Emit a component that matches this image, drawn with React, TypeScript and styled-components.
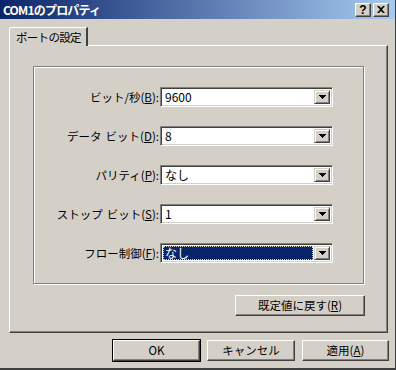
import React from 'react';
import styled, { createGlobalStyle, css } from 'styled-components';

const GlobalStyle = createGlobalStyle`
  html, body { margin: 0; padding: 0; background: #d4d0c8; }
  body { font-family: "Noto Sans CJK JP", "DejaVu Sans", sans-serif; font-size: 11.5px; color: #000; }
`;

const face = '#d4d0c8';

const Window = styled.div`
  width: 396px;
  height: 370px;
  box-sizing: border-box;
  background: ${face};
  display: flex;
  flex-direction: column;
  border-right: 1px solid #404040;
  border-bottom: 2px solid #404040;
  overflow: hidden;
`;

const TitleBar = styled.div`
  height: 19px;
  flex: none;
  display: flex;
  align-items: center;
  padding: 0 6px 0 3px;
  background: linear-gradient(to right, #0a246a, #a6caf0);
  color: #fff;
  font-weight: bold;
  font-size: 12px;
  line-height: 19px;
`;

const Title = styled.div`
  flex: 1;
  letter-spacing: -0.8px;
`;

const CapButton = styled.div<{ $gap?: number }>`
  width: 16px;
  height: 14px;
  box-sizing: border-box;
  background: ${face};
  color: #000;
  display: flex;
  align-items: center;
  justify-content: center;
  border-top: 1px solid #fff;
  border-left: 1px solid #fff;
  border-right: 1px solid #404040;
  border-bottom: 1px solid #404040;
  box-shadow: inset -1px -1px 0 #808080;
  font-family: "Liberation Sans", sans-serif;
  font-weight: bold;
  font-size: 12px;
  line-height: 1;
  margin-left: ${(p) => p.$gap ?? 0}px;
`;

const Body = styled.div`
  flex: 1;
  display: flex;
  flex-direction: column;
  padding: 8px 7px 0 9px;
`;

const TabStrip = styled.div`
  display: flex;
  height: 18px;
  position: relative;
  z-index: 1;
`;

const Tab = styled.div`
  box-sizing: border-box;
  width: 79px;
  height: 19px;
  border-top: 1px solid #fff;
  border-left: 1px solid #fff;
  border-right: 2px solid #404040;
  border-top-left-radius: 2px;
  background: ${face};
  padding: 1px 0 0 6px;
  line-height: 16px;
  white-space: nowrap;
  letter-spacing: -0.7px;
`;

const TabPanel = styled.div`
  height: 288px;
  box-sizing: border-box;
  border-top: 1px solid #fff;
  border-left: 1px solid #fff;
  border-right: 1px solid #404040;
  border-bottom: 1px solid #404040;
  box-shadow: inset -1px -1px 0 #808080;
  padding: 20px 23px 0 23px;
  display: flex;
  flex-direction: column;
`;

const Group = styled.div`
  height: 218px;
  box-sizing: border-box;
  border: 1px solid #808080;
  box-shadow: inset 1px 1px 0 #fff, 1px 1px 0 #fff;
  padding: 20px 0 0 0;
  display: grid;
  grid-template-columns: 125px 173px;
  grid-auto-rows: 20px;
  row-gap: 19px;
  column-gap: 1px;
  align-items: center;
`;

const Label = styled.div`
  text-align: right;
  white-space: nowrap;
  line-height: 20px;
`;

const Space = styled.span`
  display: inline-block;
  width: 4px;
`;

const Combo = styled.div`
  box-sizing: border-box;
  height: 20px;
  border-top: 1px solid #808080;
  border-left: 1px solid #808080;
  border-right: 1px solid #fff;
  border-bottom: 1px solid #fff;
  box-shadow: inset 1px 1px 0 #404040, inset -1px -1px 0 ${face};
  background: #fff;
  display: flex;
  align-items: stretch;
  padding: 2px;
`;

const ComboText = styled.div<{ $selected?: boolean }>`
  flex: 1;
  padding-left: 2px;
  line-height: 14px;
  font-size: 12px;
  ${(p) =>
    p.$selected &&
    css`
      background: #0a246a;
      color: #fff;
      outline: 1px dotted #d4d0c8;
      outline-offset: -1px;
      margin: 0 1px 0 0;
    `}
`;

const DropButton = styled.div`
  width: 16px;
  box-sizing: border-box;
  background: ${face};
  border-top: 1px solid ${face};
  border-left: 1px solid ${face};
  border-right: 1px solid #404040;
  border-bottom: 1px solid #404040;
  box-shadow: inset 1px 1px 0 #fff, inset -1px -1px 0 #808080;
  display: flex;
  align-items: center;
  justify-content: center;
`;

const Arrow = () => (
  <svg width="7" height="4" viewBox="0 0 7 4">
    <path d="M0 0h7v1h-1v1h-1v1h-1v1h-1v-1h-1v-1h-1v-1h-1z" fill="#000" />
  </svg>
);

const PanelFoot = styled.div`
  display: flex;
  justify-content: flex-end;
  margin-top: 11px;
  margin-right: -1px;
`;

const Button = styled.div<{ $w: number; $default?: boolean }>`
  width: ${(p) => p.$w}px;
  height: 21px;
  box-sizing: border-box;
  background: ${face};
  border-top: 1px solid #fff;
  border-left: 1px solid #fff;
  border-right: 1px solid #404040;
  border-bottom: 1px solid #404040;
  box-shadow: inset -1px -1px 0 #808080;
  display: flex;
  align-items: center;
  justify-content: center;
  line-height: 1;
  ${(p) =>
    p.$default &&
    css`
      outline: 1px solid #000;
    `}
`;

const Footer = styled.div`
  display: flex;
  justify-content: flex-end;
  gap: 7px;
  margin-top: 7px;
  margin-right: -1px;
`;

const fields: { label: React.ReactNode; value: string; selected?: boolean }[] = [
  { label: <>ビット/秒(<u>B</u>):</>, value: '9600' },
  { label: <>データ<Space />ビット(<u>D</u>):</>, value: '8' },
  { label: <>パリティ(<u>P</u>):</>, value: 'なし' },
  { label: <>ストップ<Space />ビット(<u>S</u>):</>, value: '1' },
  { label: <>フロー制御(<u>F</u>):</>, value: 'なし', selected: true },
];

export default function App() {
  return (
    <>
      <GlobalStyle />
      <Window>
        <TitleBar>
          <Title>COM1のプロパティ</Title>
          <CapButton>?</CapButton>
          <CapButton $gap={2}>
            <svg width="8" height="7" viewBox="0 0 8 7">
              <path d="M0 0h2l2 2l2-2h2l-3 3.5l3 3.5h-2l-2-2l-2 2h-2l3-3.5z" fill="#000" />
            </svg>
          </CapButton>
        </TitleBar>
        <Body>
          <TabStrip>
            <Tab>ポートの設定</Tab>
          </TabStrip>
          <TabPanel>
            <Group>
              {fields.map((f, i) => (
                <React.Fragment key={i}>
                  <Label>{f.label}</Label>
                  <Combo>
                    <ComboText $selected={f.selected}>{f.value}</ComboText>
                    <DropButton>
                      <Arrow />
                    </DropButton>
                  </Combo>
                </React.Fragment>
              ))}
            </Group>
            <PanelFoot>
              <Button $w={130}>既定値に戻す(<u>R</u>)</Button>
            </PanelFoot>
          </TabPanel>
          <Footer>
            <Button $w={87} $default>OK</Button>
            <Button $w={88}>キャンセル</Button>
            <Button $w={87}>適用(<u>A</u>)</Button>
          </Footer>
        </Body>
      </Window>
    </>
  );
}
